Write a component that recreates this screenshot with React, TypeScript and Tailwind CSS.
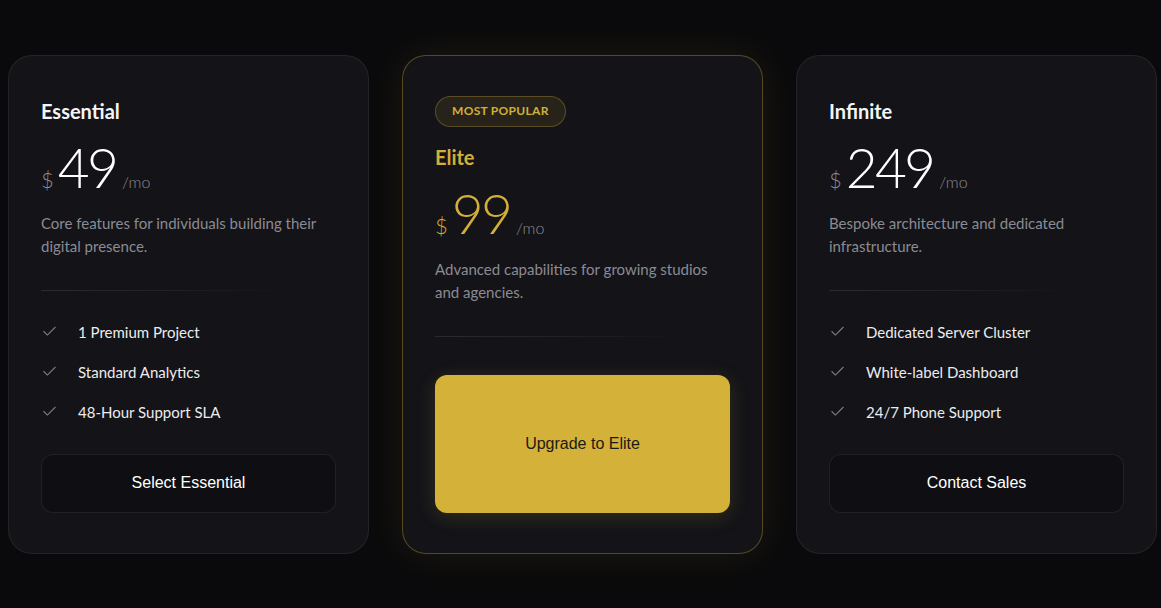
import { Check } from 'lucide-react';

const BODY = { fontFamily: 'Lato, "Noto Sans", sans-serif' };
const BTN = { fontFamily: '"Liberation Sans", Arial, sans-serif' };

interface Plan {
  name: string;
  price: string;
  blurb: string[];
  features: string[];
  cta: string;
  featured?: boolean;
}

const PLANS: Plan[] = [
  {
    name: 'Essential',
    price: '49',
    blurb: ['Core features for individuals building their', 'digital presence.'],
    features: ['1 Premium Project', 'Standard Analytics', '48-Hour Support SLA'],
    cta: 'Select Essential',
  },
  {
    name: 'Elite',
    price: '99',
    blurb: ['Advanced capabilities for growing studios', 'and agencies.'],
    features: [],
    cta: 'Upgrade to Elite',
    featured: true,
  },
  {
    name: 'Infinite',
    price: '249',
    blurb: ['Bespoke architecture and dedicated', 'infrastructure.'],
    features: ['Dedicated Server Cluster', 'White-label Dashboard', '24/7 Phone Support'],
    cta: 'Contact Sales',
  },
];

function PlanCard({ plan }: { plan: Plan }) {
  const f = plan.featured;
  return (
    <div
      className={`flex flex-col rounded-3xl border px-8 pt-[41px] pb-10 bg-[#131318] ${
        f
          ? 'border-[#d4af37]/35 shadow-[0_0_40px_rgba(212,175,55,0.10)]'
          : 'border-white/[0.07]'
      }`}
    >
      {f && (
        <div className="mb-4 -mt-[1px] self-start rounded-full border border-[#d4af37]/30 bg-[#d4af37]/10 px-4 h-[31px] flex items-center text-[12px] font-bold tracking-wide text-[#d4af37]">
          MOST POPULAR
        </div>
      )}

      {/* Name */}
      <h3 className={`text-[20px] leading-7 font-bold ${f ? 'text-[#d4af37]' : 'text-[#f5f5f7]'}`}>
        {plan.name}
      </h3>

      {/* Price */}
      <div className="mt-[15px] flex items-baseline gap-1">
        <span className={`text-[22px] font-light ${f ? 'text-[#d4af37]' : 'text-[#8b8b93]'}`}>$</span>
        <span className={`text-[55px] leading-none font-light tracking-[-0.05em] ${f ? 'text-[#d4af37]' : 'text-white'}`}>
          {plan.price}
        </span>
        <span className="ml-[2px] text-[16px] font-light text-[#8b8b93]">/mo</span>
      </div>

      {/* Description */}
      <p className="mt-4 whitespace-nowrap text-[15px] leading-[23px] text-[#8b8b93]">
        {plan.blurb[0]}
        <br />
        {plan.blurb[1]}
      </p>

      <div className="mt-8 h-px w-[85%] bg-gradient-to-r from-white/10 via-white/[0.06] to-transparent" />

      {plan.features.length > 0 && (
        <ul className="mt-[29px] flex flex-col gap-4">
          {plan.features.map(item => (
            <li key={item} className="flex items-center gap-5 text-[15px] leading-6 text-[#ececef]">
              <Check size={17} strokeWidth={1.5} className="text-[#7c7c84]" />
              {item}
            </li>
          ))}
        </ul>
      )}

      {f ? (
        <button
          style={BTN}
          className="mt-[38px] flex-1 rounded-xl bg-[#d4b139] text-[16px] text-[#1c1a14] shadow-[0_4px_20px_rgba(212,175,55,0.18)]"
        >
          {plan.cta}
        </button>
      ) : (
        <button
          style={BTN}
          className="mt-[30px] h-[59px] rounded-xl border border-white/[0.08] bg-[#0f0f13] text-[16px] text-white"
        >
          {plan.cta}
        </button>
      )}
    </div>
  );
}

export default function App() {
  return (
    <div style={BODY} className="min-h-screen bg-[#0a0a0c] flex items-center pl-2">
      <div className="grid w-[1149px] grid-cols-3 gap-[33px]">
        {PLANS.map(p => (
          <PlanCard key={p.name} plan={p} />
        ))}
      </div>
    </div>
  );
}
